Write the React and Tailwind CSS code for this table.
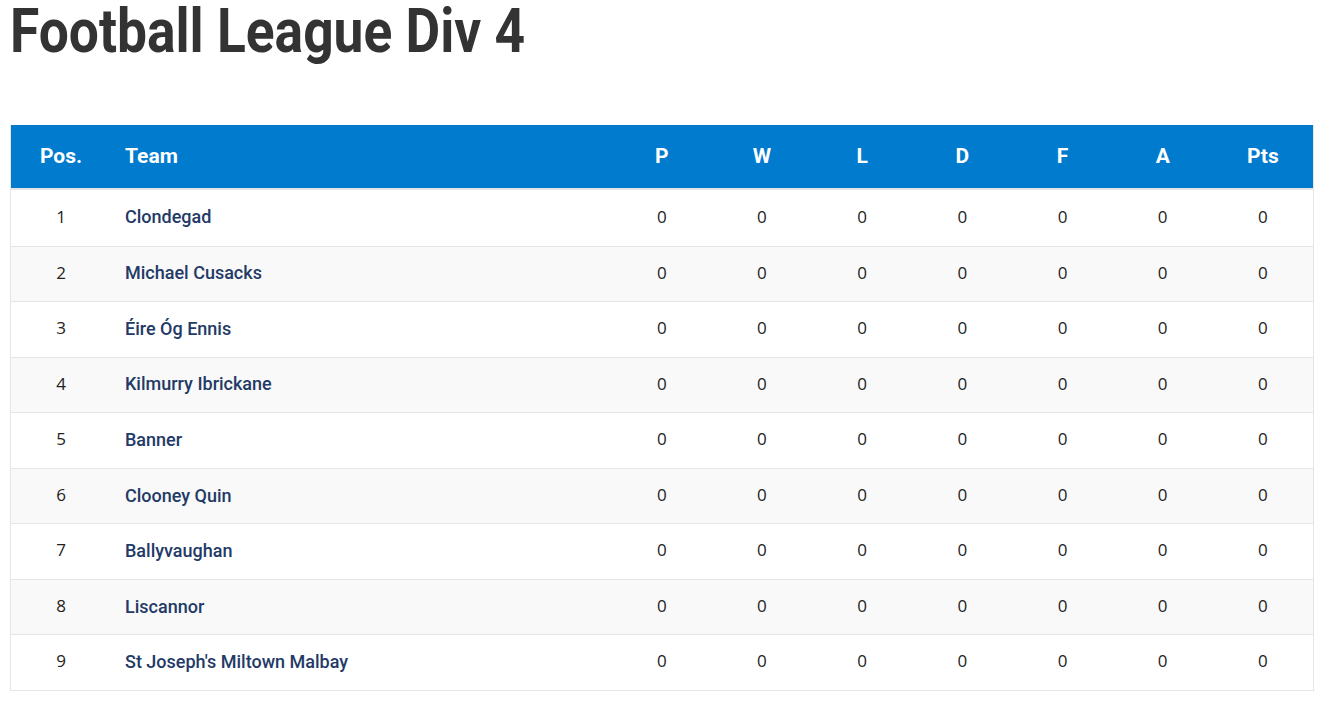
const TEAMS = [
  'Clondegad',
  'Michael Cusacks',
  'Éire Óg Ennis',
  'Kilmurry Ibrickane',
  'Banner',
  'Clooney Quin',
  'Ballyvaughan',
  'Liscannor',
  "St Joseph's Miltown Malbay",
];

const COLS = ['P', 'W', 'L', 'D', 'F', 'A', 'Pts'];

export default function App() {
  return (
    <div className="min-h-screen bg-white pl-[10px] pr-[18px]" style={{ fontFamily: 'Roboto, "Noto Sans", sans-serif' }}>
      <h1 className="h-[125px]">
        <span className="inline-block origin-left scale-x-[0.86] text-[62px] leading-[62px] font-bold text-[#333333] whitespace-nowrap">
          Football League Div 4
        </span>
      </h1>

      <div className="border-x border-b border-[#e5e5e5]">
        {/* header */}
        <div className="flex h-[65px] items-center bg-[#007bce] border-b-2 border-[#e5e5e5] text-white text-[21px] font-bold">
          <div className="w-[100px] text-center">Pos.</div>
          <div className="flex-1 pl-[14px]">Team</div>
          {COLS.map((c) => (
            <div key={c} className="w-[100.2px] text-center">{c}</div>
          ))}
        </div>

        {TEAMS.map((t, i) => (
          <div
            key={t}
            className={`flex h-[55.55px] items-center text-[17px] text-[#222222] ${i > 0 ? 'border-t border-[#e5e5e5]' : ''} ${i % 2 ? 'bg-[#f9f9f9]' : 'bg-white'}`}
          >
            <div className="w-[100px] pb-[3px] text-center font-['Open_Sans',sans-serif]">{i + 1}</div>
            <div className="flex-1 pl-[14px] pb-[2px] text-[18px] font-medium text-[#233a66]">{t}</div>
            {COLS.map((c) => (
              <div key={c} className="w-[100.2px] pb-[3px] text-center font-['Open_Sans',sans-serif]">0</div>
            ))}
          </div>
        ))}
      </div>
    </div>
  );
}
